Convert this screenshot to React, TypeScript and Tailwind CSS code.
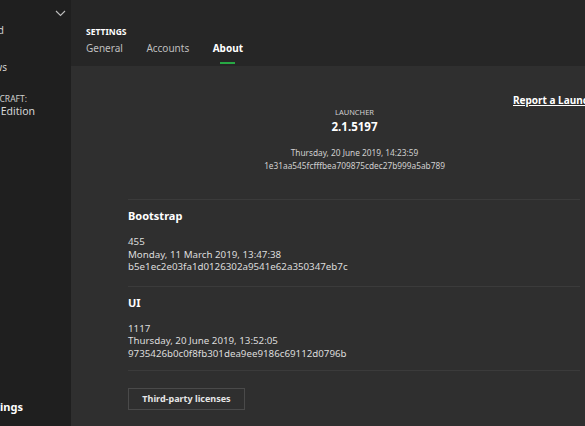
const font = { fontFamily: '"Noto Sans", "Open Sans", sans-serif' }

interface BuildInfo {
  title: string
  build: string
  date: string
  hash: string
}

const builds: BuildInfo[] = [
  {
    title: 'Bootstrap',
    build: '455',
    date: 'Monday, 11 March 2019, 13:47:38',
    hash: 'b5e1ec2e03fa1d0126302a9541e62a350347eb7c',
  },
  {
    title: 'UI',
    build: '1117',
    date: 'Thursday, 20 June 2019, 13:52:05',
    hash: '9735426b0c0f8fb301dea9ee9186c69112d0796b',
  },
]

const tabs = ['General', 'Accounts', 'About']

const Sidebar = () => (
  <aside className="w-[71px] shrink-0 bg-[#1f1f1f] overflow-hidden relative text-[#cfcfcf]">
    <svg className="absolute left-[55px] top-[10px]" width="11" height="7" viewBox="0 0 11 7" fill="none">
      <path d="M1 1l4.5 4.5L10 1" stroke="#bdbdbd" strokeWidth="1.1" />
    </svg>
    <div className="pt-[23px]">
      <div className="w-[4px] flex justify-end whitespace-nowrap text-[10px] leading-[14px]">Installed</div>
      <div className="mt-[23px] w-[7px] flex justify-end whitespace-nowrap text-[10px] leading-[14px]">Patch Notes News</div>
      <div className="mt-[19px] w-[27px] flex justify-end whitespace-nowrap text-[8.5px] leading-[11px] uppercase">Minecraft:</div>
      <div className="w-[35px] flex justify-end whitespace-nowrap text-[10.5px] leading-[15px] text-[#d6d6d6]">Java Edition</div>
    </div>
    <div className="absolute top-[399px] left-0 w-[23px] flex justify-end whitespace-nowrap text-[11px] font-bold text-white">
      Settings
    </div>
  </aside>
)

const Header = () => (
  <header className="h-[66px] bg-[#262626] pl-[15px] pt-[26px] shrink-0">
    <div className="text-[8.5px] leading-[11px] font-bold text-white">SETTINGS</div>
    <nav className="flex gap-[23.5px] mt-[4px]">
      {tabs.map((t) => (
        <div key={t} className="flex flex-col items-center">
          <span className={`text-[10px] leading-[14px] ${t === 'About' ? 'font-bold text-white' : 'text-[#bfbfbf]'}`}>{t}</span>
          <span className={`mt-[7px] h-[2px] w-[15px] ${t === 'About' ? 'bg-[#27a844]' : 'bg-transparent'}`} />
        </div>
      ))}
    </nav>
  </header>
)

const BuildSection = ({ info, pb }: { info: BuildInfo; pb: string }) => (
  <section className={`border-t border-[#3b3b3b] pt-[7px] ${pb}`}>
    <h3 className="text-[11px] leading-[18px] font-bold text-white">{info.title}</h3>
    <div className="mt-[11px] text-[9.75px] leading-[12.5px] text-[#dcdcdc]">
      <p>{info.build}</p>
      <p>{info.date}</p>
      <p>{info.hash}</p>
    </div>
  </section>
)

export default function App() {
  return (
    <div className="w-[585px] h-[426px] flex overflow-hidden bg-[#2f2f2f]" style={font}>
      <Sidebar />
      <div className="flex-1 flex flex-col min-w-0">
        <Header />
        <main className="flex-1 bg-[#2f2f2f] pl-[57px] overflow-hidden">
          <div className="w-[452px]">
            <div className="pt-[27px] ml-[385px] whitespace-nowrap text-[10px] leading-[14px] font-bold text-white underline">
              Report a Launcher bug
            </div>
            <div className="w-[453px] flex flex-col items-center text-[#cfcfcf]">
              <div className="text-[7.5px] leading-[10px] uppercase">Launcher</div>
              <div className="mt-[1px] text-[11.5px] leading-[17px] font-bold text-white">2.1.5197</div>
              <div className="mt-[11px] text-[8.3px] leading-[13px]">Thursday, 20 June 2019, 14:23:59</div>
              <div className="text-[8.3px] leading-[13px]">1e31aa545fcfffbea709875cdec27b999a5ab789</div>
            </div>
            <div className="mt-[27px]">
              <BuildSection info={builds[0]} pb="pb-[12px]" />
              <BuildSection info={builds[1]} pb="pb-[10px]" />
              <div className="border-t border-[#3b3b3b] pt-[17px] flex">
                <button className="w-[117px] h-[22px] border border-[#4a4a4a] text-[9px] font-bold text-[#e6e6e6]">
                  Third-party licenses
                </button>
              </div>
            </div>
          </div>
        </main>
      </div>
    </div>
  )
}
